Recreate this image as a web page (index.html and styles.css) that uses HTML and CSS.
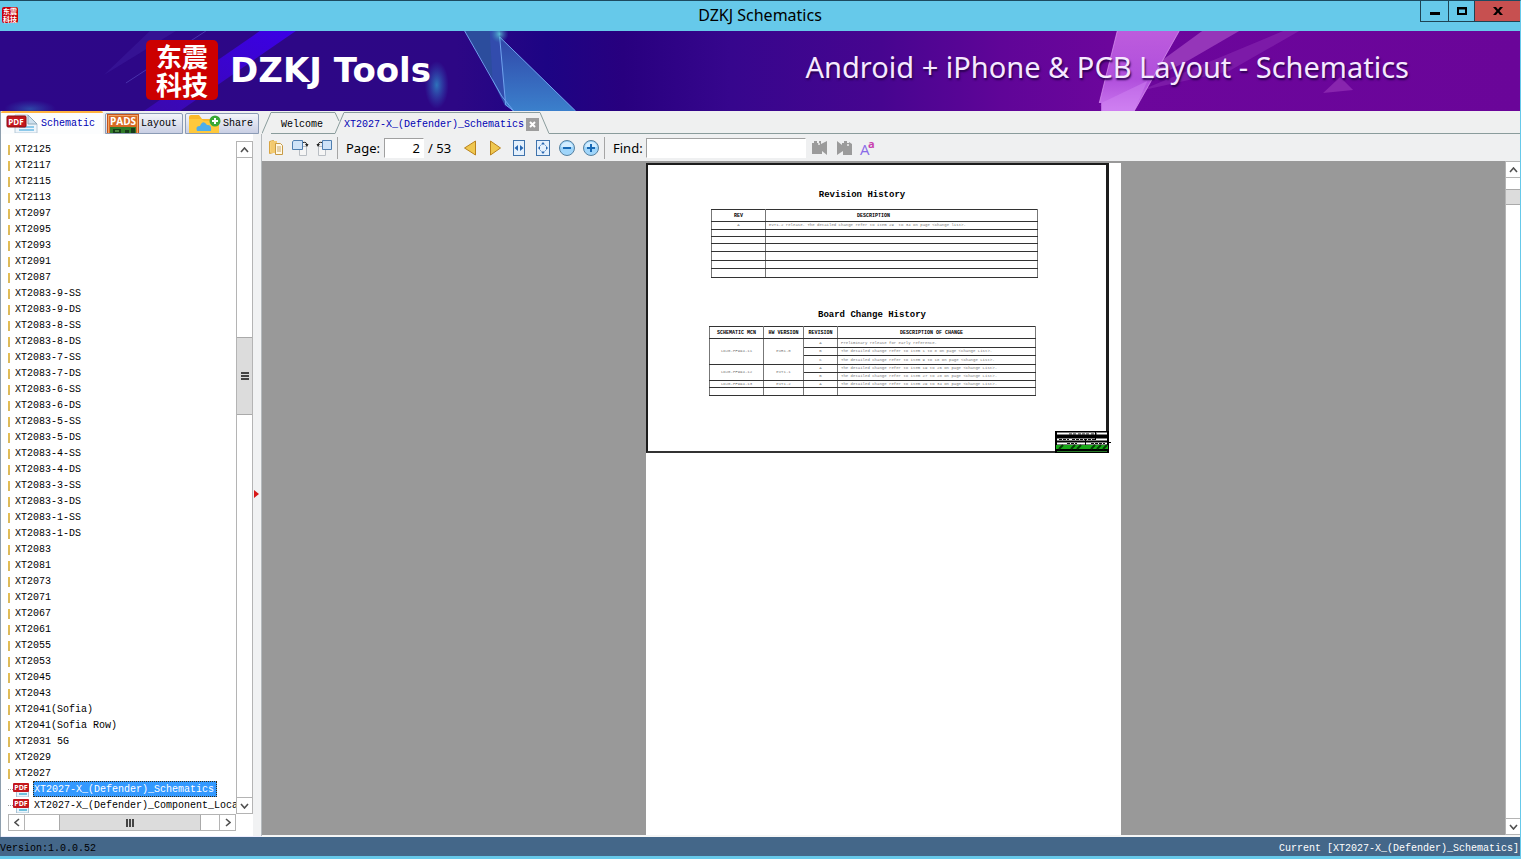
FILE: index.html
```html
<!DOCTYPE html>
<html lang="en">
<head>
<meta charset="utf-8">
<title>DZKJ Schematics</title>
<link rel="stylesheet" href="styles.css">
</head>
<body>
<div class="window">
  <header class="titlebar">
    <span class="app-icon">东震<br>科技</span>
    <h1 class="title">DZKJ Schematics</h1>
    <div class="win-buttons">
      <button class="win-btn" aria-label="Minimize"><svg width="10" height="10"><rect y="6" width="10" height="3"/></svg></button>
      <button class="win-btn win-max" aria-label="Maximize"><svg width="10" height="10"><path d="M0 1h10v8H0zM2 3.500v3.500h6v-3.500z" fill-rule="evenodd"/></svg></button>
      <button class="win-btn win-close" aria-label="Close"><svg width="10" height="10"><path d="M0 1h3l2 2.500L7 1h3L6.500 5 10 9H7L5 6.500 3 9H0l3.500-4z"/></svg></button>
    </div>
  </header>

  <div class="banner">
    <svg class="banner-art" viewBox="0 0 1521 80" preserveAspectRatio="none" aria-hidden="true">
      <defs>
        <linearGradient id="bg"><stop offset="0" stop-color="#2d0788"/><stop offset=".3" stop-color="#2d0785"/><stop offset=".36" stop-color="#1d0484"/><stop offset=".41" stop-color="#28007f"/><stop offset=".48" stop-color="#36068d"/><stop offset=".58" stop-color="#470590"/><stop offset=".66" stop-color="#600598"/><stop offset=".73" stop-color="#6c069c"/><stop offset="1" stop-color="#6a0599"/></linearGradient>
        <linearGradient id="beam" x1="1" y1="0" x2="0" y2="1"><stop offset="0" stop-color="#3b00e6"/><stop offset="1" stop-color="#3a09ae"/></linearGradient>
        <linearGradient id="shard" x1="0" y1="0" x2="0" y2="1"><stop offset="0" stop-color="#3046a8"/><stop offset="1" stop-color="#3b80cc"/></linearGradient>
        <linearGradient id="pink" x1="0" y1="0" x2="0" y2="1"><stop offset="0" stop-color="#bd5cdd"/><stop offset=".6" stop-color="#b04fdc"/><stop offset="1" stop-color="#cb78ef"/></linearGradient>
        <radialGradient id="glow"><stop offset="0" stop-color="#2e7fc0" stop-opacity=".9"/><stop offset="1" stop-color="#2e5fc0" stop-opacity="0"/></radialGradient>
        <radialGradient id="spark"><stop offset="0" stop-color="#6af0e8"/><stop offset="1" stop-color="#3a90c0" stop-opacity="0"/></radialGradient>
      </defs>
      <rect width="1521" height="80" fill="url(#bg)"/>
      <path d="M260 0h36L180 80h-36z" fill="url(#beam)"/>
      <path d="M150 0h26L104 44z" fill="#3d1ea0" opacity=".5"/>
      <path d="M206 0L126 52" stroke="#5545bd" opacity=".7"/>
      <ellipse cx="30" cy="78" rx="26" ry="9" fill="url(#glow)" opacity=".6"/>
      <ellipse cx="437" cy="54" rx="12" ry="24" fill="url(#glow)"/>
      <path d="M465 0h35v60z" fill="#2c4d9d"/>
      <path d="M490 0h10l6 76-13-26z" fill="#324cad"/>
      <path d="M500 6l76 74h-62l-8-6z" fill="url(#shard)"/>
      <path d="M465 0l37 65 12 15M500 6l76 74M500 6l6 68 8 6" fill="none" stroke="#6fa4ef"/>
      <circle cx="500" cy="3" r="9" fill="url(#spark)" opacity=".7"/>
      <path d="M1203 0h37l-50 29-90 46z" fill="#a64bc6" opacity=".7"/>
      <path d="M1284 0h16l-70 40-90 20z" fill="#8a2cb2" opacity=".55"/>
      <path d="M1118 0h62l-45 80h-33v-8h-2z" fill="url(#pink)"/>
      <path d="M1102 72l46-22-13 30h-33z" fill="#d48bf5" opacity=".4"/>
      <path d="M1118 0l-18 72M1180 0l-45 80" stroke="#dd98f2" fill="none" opacity=".7"/>
      <path d="M1324 62l17-16 13 13z" fill="#8825ae"/>
    </svg>
    <div class="brand">
      <span class="logo"><span>东震</span><span>科技</span></span>
      <span class="brand-name">DZKJ Tools</span>
    </div>
    <p class="tagline">Android + iPhone &amp; PCB Layout - Schematics</p>
  </div>

  <main class="main">
    <aside class="sidebar">
      <div class="side-tabs">
        <button class="side-tab side-active">
          <svg width="32" height="19"><path d="M9 1h13l9 9v9H9z" fill="#eef5fb" stroke="#b8cad8"/><path d="M22 1l9 9h-9z" fill="#cfe1ee" stroke="#8fa9ba"/><path d="M13 13h15M13 16h15" stroke="#8cc9ea" stroke-width="2"/><rect x="1" y="2" width="19" height="11" rx="1" fill="#c4161c" stroke="#8c0c10"/><text x="10" y="11" class="pdf-text">PDF</text></svg>
          Schematic</button>
        <button class="side-tab side-layout">
          <svg width="32" height="19"><rect width="32" height="19" fill="#c6541b"/><rect x="1.500" y="1.500" width="29" height="18" fill="#d86a24" stroke="#f0a565"/><text x="16" y="11" class="pads-text">PADS</text><path d="M3 13h26v6H3z" fill="#2e7a28"/><path d="M6 15h8v4H6zM18 16h4v3h-4zM24 14h4v5h-4z" fill="#173c1a"/><path d="M8 17h4" stroke="#7fd063"/></svg>
          Layout</button>
        <button class="side-tab side-share">
          <svg width="32" height="19"><path d="M0 3q0-2 2-2h8l3 4h14q3 0 3 3v11H0z" fill="#fbb829"/><path d="M0 5h12l3 2h15v12H0z" fill="#ffc93c"/><path d="M8 17q-2-5 3-5 3-7 7-1 5-1 4 6z" fill="#4eaeea"/><circle cx="26" cy="7" r="5.500" fill="#39a935"/><path d="M26 4v6M23 7h6" stroke="#fff" stroke-width="2"/></svg>
          Share</button>
      </div>
      <div class="side-body">
        <div class="tree-box">
          <ul class="tree">
            <li><a href="#">XT2125</a></li><li><a href="#">XT2117</a></li><li><a href="#">XT2115</a></li><li><a href="#">XT2113</a></li><li><a href="#">XT2097</a></li><li><a href="#">XT2095</a></li><li><a href="#">XT2093</a></li><li><a href="#">XT2091</a></li><li><a href="#">XT2087</a></li>
            <li><a href="#">XT2083-9-SS</a></li><li><a href="#">XT2083-9-DS</a></li><li><a href="#">XT2083-8-SS</a></li><li><a href="#">XT2083-8-DS</a></li><li><a href="#">XT2083-7-SS</a></li><li><a href="#">XT2083-7-DS</a></li><li><a href="#">XT2083-6-SS</a></li><li><a href="#">XT2083-6-DS</a></li><li><a href="#">XT2083-5-SS</a></li><li><a href="#">XT2083-5-DS</a></li><li><a href="#">XT2083-4-SS</a></li><li><a href="#">XT2083-4-DS</a></li><li><a href="#">XT2083-3-SS</a></li><li><a href="#">XT2083-3-DS</a></li><li><a href="#">XT2083-1-SS</a></li><li><a href="#">XT2083-1-DS</a></li>
            <li><a href="#">XT2083</a></li><li><a href="#">XT2081</a></li><li><a href="#">XT2073</a></li><li><a href="#">XT2071</a></li><li><a href="#">XT2067</a></li><li><a href="#">XT2061</a></li><li><a href="#">XT2055</a></li><li><a href="#">XT2053</a></li><li><a href="#">XT2045</a></li><li><a href="#">XT2043</a></li><li><a href="#">XT2041(Sofia)</a></li><li><a href="#">XT2041(Sofia Row)</a></li><li><a href="#">XT2031 5G</a></li><li><a href="#">XT2029</a></li><li><a href="#">XT2027</a></li>
            <li class="leaf"><svg width="24" height="16"><path d="M0 8.500h5" stroke="#999" stroke-dasharray="1 1"/><path d="M8.500 4v12h12V6" fill="#eaf4fb" stroke="#a9c3d4"/><path d="M11 13h8" stroke="#6fc0dc" stroke-width="2"/><rect x="5" y="2" width="16" height="9" rx="1" fill="#c4161c"/><text x="13" y="9" class="pdf-small">PDF</text></svg><a class="selected" href="#">XT2027-X_(Defender)_Schematics</a></li>
            <li class="leaf"><svg width="24" height="16"><path d="M0 8.500h5" stroke="#999" stroke-dasharray="1 1"/><path d="M8.500 4v12h12V6" fill="#eaf4fb" stroke="#a9c3d4"/><path d="M11 13h8" stroke="#6fc0dc" stroke-width="2"/><rect x="5" y="2" width="16" height="9" rx="1" fill="#c4161c"/><text x="13" y="9" class="pdf-small">PDF</text></svg><a href="#">XT2027-X_(Defender)_Component_Loca</a></li>
          </ul>
          <div class="vscroll">
            <button class="arrow" aria-label="Scroll up"><svg width="9" height="6"><path d="M1 5l3.500-4L8 5"/></svg></button>
            <div class="track track-top"></div>
            <div class="thumb"><svg width="8" height="8"><path d="M0 1h8M0 4h8M0 7h8"/></svg></div>
            <div class="track track-bottom"></div>
            <button class="arrow" aria-label="Scroll down"><svg width="9" height="6"><path d="M1 1l3.500 4L8 1"/></svg></button>
          </div>
          <div class="hscroll">
            <button class="arrow" aria-label="Scroll left"><svg width="6" height="9"><path d="M5 1L1 4.500 5 8"/></svg></button>
            <div class="track track-left"></div>
            <div class="thumb"><svg width="8" height="8"><path d="M1 0v8M4 0v8M7 0v8"/></svg></div>
            <div class="track track-right"></div>
            <button class="arrow" aria-label="Scroll right"><svg width="6" height="9"><path d="M1 1l4 3.500L1 8"/></svg></button>
          </div>
        </div>
        <div class="splitter"><svg width="5" height="8"><path d="M0 0l5 4-5 4z" fill="#d81818"/></svg></div>
      </div>
    </aside>

    <section class="doc">
      <div class="doc-tabs">
        <svg class="slant" width="9" height="22"><path d="M0 21.500L9 .500"/></svg>
        <button class="doc-tab">Welcome</button>
        <svg class="slant" width="9" height="22"><path d="M0 .500L4 9M0 21.500L9 .500"/></svg>
        <div class="doc-tab doc-active"><button class="tab-name">XT2027-X_(Defender)_Schematics</button><button class="tab-close" aria-label="Close tab"><svg width="7" height="7"><path d="M1 1l5 5M6 1L1 6" stroke="#fff" stroke-width="2"/></svg></button></div>
        <svg class="slant" width="9" height="22"><path d="M0 .500L9 21.500"/></svg>
        <div class="tab-rest"></div>
      </div>

      <div class="toolbar">
        <button class="tool" aria-label="Open"><svg width="16" height="16"><path d="M1.500 1.500l4-1v12l-4 1z" fill="#f7d27c" stroke="#d9a441"/><path d="M3 1h6v12H3z" fill="#f3ca70"/><path d="M7.500 3.500h5l2 2v9h-7z" fill="#fff8e6" stroke="#c79a45"/><path d="M9 7h4M9 9h4M9 11h4" stroke="#c9a86a"/></svg></button>
        <button class="tool" aria-label="Rotate right"><svg width="17" height="16"><path d="M7.500 6.500h7v9h-7z" fill="#f5f5f5" stroke="#b9bec4"/><path d="M1.500.500h9v9h-10V2z" fill="#cfe3f8" stroke="#4f7eb0"/><path d="M11 2.500q4-1 4 3" fill="none" stroke="#222"/><path d="M13 4h3.500L15 7z" fill="#222"/></svg></button>
        <button class="tool" aria-label="Rotate left"><svg width="17" height="16"><path d="M2.500 6.500h7v9h-7z" fill="#f5f5f5" stroke="#b9bec4"/><path d="M6.500.500h9v9h-9z" fill="#cfe3f8" stroke="#4f7eb0"/><path d="M6 2.500q-4-1-4 3" fill="none" stroke="#222"/><path d="M.500 4h3.500L2 7z" fill="#222"/></svg></button>
        <span class="sep"></span>
        <label class="page-label" for="page">Page:</label>
        <input class="page-input" id="page" value="2">
        <span class="page-total">/ 53</span>
        <button class="tool" aria-label="Previous page"><svg width="14" height="16"><path d="M11.500 1v14L.500 8z" fill="#efc750" stroke="#b9821c"/></svg></button>
        <button class="tool" aria-label="Next page"><svg width="14" height="16"><path d="M2.500 1v14l10-7z" fill="#efc750" stroke="#b9821c"/></svg></button>
        <button class="tool" aria-label="Fit width"><svg width="16" height="16"><rect x="2.500" y=".500" width="11" height="15" fill="#e4f0fc" stroke="#3f73ac"/><path d="M7 5v6L3.500 8zM9 5v6l3.500-3z" fill="#2867b2"/></svg></button>
        <button class="tool" aria-label="Fit page"><svg width="16" height="16"><rect x="1.500" y=".500" width="13" height="15" fill="#e4f0fc" stroke="#3f73ac"/><path d="M6 4.500L8 2l2 2.500zM6 11.500L8 14l2-2.500zM5 6L3 8l2 2zM11 6l2 2-2 2z" fill="#2867b2"/><path d="M5 5l1 1M11 5l-1 1M5 11l1-1M11 11l-1-1" stroke="#7ba6d5"/></svg></button>
        <button class="tool" aria-label="Zoom out"><svg width="16" height="16"><circle cx="8" cy="8" r="7.500" fill="#9fd5fa" stroke="#56809f"/><path d="M2 7q1-5 6-5t6 5z" fill="#d2edff"/><path d="M4 8h8" stroke="#1769b5" stroke-width="2"/></svg></button>
        <button class="tool" aria-label="Zoom in"><svg width="16" height="16"><circle cx="8" cy="8" r="7.500" fill="#9fd5fa" stroke="#56809f"/><path d="M2 7q1-5 6-5t6 5z" fill="#d2edff"/><path d="M4 8h8M8 4v8" stroke="#1769b5" stroke-width="2"/></svg></button>
        <span class="sep"></span>
        <label class="find-label" for="find">Find:</label>
        <input class="find-input" id="find">
        <button class="tool" aria-label="Find previous"><svg width="16" height="16"><path d="M0 3h2V1h3v2h2V1h2v3l6-3v14l-5-4v3H0z" fill="#9b9b9b"/><circle cx="7" cy="4" r="1" fill="#eee"/></svg></button>
        <button class="tool" aria-label="Find next"><svg width="16" height="16"><path d="M1 1l5 4V3h2V1h3v2h2V2l3 2v11H7v-4l-6 4z" fill="#9b9b9b"/><circle cx="12" cy="5" r="1" fill="#eee"/></svg></button>
        <button class="tool" aria-label="Match case"><svg width="24" height="24"><text x="4" y="19" class="case-big">A</text><text x="12" y="12" class="case-small">a</text></svg></button>
      </div>

      <div class="viewer">
        <div class="canvas">
          <article class="page">
            <div class="sheet">
              <h2 class="sheet-title">Revision History</h2>
              <table class="grid rev-table">
                <colgroup><col class="c-rev"><col></colgroup>
                <tr class="r-head"><th>REV</th><th class="h-desc">DESCRIPTION</th></tr>
                <tr><td>A</td><td class="desc">EVT1.2 release. The detailed change refer to item 29 &nbsp;to 34 on page &lt;Change list&gt;.</td></tr>
                <tr class="r-short"><td></td><td></td></tr>
                <tr class="r-short"><td></td><td></td></tr>
                <tr><td></td><td></td></tr>
                <tr class="r-tall"><td></td><td></td></tr>
                <tr><td></td><td></td></tr>
                <tr class="r-tall"><td></td><td></td></tr>
              </table>
              <h2 class="sheet-title sheet-second">Board Change History</h2>
              <table class="grid board-table">
                <colgroup><col class="c-rev"><col class="c-hw"><col class="c-revision"><col></colgroup>
                <tr class="r-head"><th>SCHEMATIC MCN</th><th>HW VERSION</th><th>REVISION</th><th class="h-change">DESCRIPTION OF CHANGE</th></tr>
                <tr class="r-tall"><td rowspan="3">LD20-PF994-11</td><td rowspan="3">EVR1.0</td><td>A</td><td class="desc">Preliminary release for early reference.</td></tr>
                <tr><td>B</td><td class="desc">The detailed change refer to item 1 to 8 on page &lt;Change List&gt;.</td></tr>
                <tr class="r-tall"><td>C</td><td class="desc">The detailed change refer to item 9 to 18 on page &lt;Change List&gt;.</td></tr>
                <tr><td rowspan="2">LD20-PF994-12</td><td rowspan="2">EVT1.1</td><td>A</td><td class="desc">The detailed change refer to item 19 to 26 on page &lt;Change List&gt;.</td></tr>
                <tr><td>B</td><td class="desc">The detailed change refer to item 27 to 28 on page &lt;Change List&gt;.</td></tr>
                <tr class="r-short"><td>LD20-PF994-13</td><td>EVT1.2</td><td>A</td><td class="desc">The detailed change refer to item 29 to 34 on page &lt;Change List&gt;.</td></tr>
                <tr><td></td><td></td><td></td><td></td></tr>
              </table>
              <svg class="stamp" width="56" height="22" aria-hidden="true"><rect width="54" height="22" fill="#000"/><path d="M2 2.500h50M2 8.500h50M2 12.500h50" stroke="#fff" stroke-width="2"/><path d="M14 3h8M23 3h11M36 3h6M4 8.500h10M17 8.500h24M12 12.500h10M36 12.500h14" stroke="#111" stroke-dasharray="3 1"/><path d="M40.500 0v9M30.500 8v7M52 11.500h4" stroke="#000"/><rect x="1" y="14" width="52" height="4" fill="#18a818"/><path d="M4 18l4-4M16 18l4-4M22 18l4-4M36 18l4-4M42 18l4-4M48 18l4-4" stroke="#053c05" stroke-width="2"/><path d="M2 20.500h50" stroke="#277a27"/></svg>
            </div>
          </article>
        </div>
        <div class="vscroll doc-scroll">
          <button class="arrow" aria-label="Scroll up"><svg width="9" height="6"><path d="M1 5l3.500-4L8 5"/></svg></button>
          <div class="track track-short"></div>
          <div class="thumb"></div>
          <div class="track track-bottom"></div>
          <button class="arrow" aria-label="Scroll down"><svg width="9" height="6"><path d="M1 1l3.500 4L8 1"/></svg></button>
        </div>
      </div>
    </section>
  </main>

  <footer class="status"><span>Version:1.0.0.52</span><span class="current">Current [XT2027-X_(Defender)_Schematics]</span></footer>
</div>
</body>
</html>
```
FILE: styles.css
```css
* { box-sizing: border-box; }
body { margin: 0; overflow: hidden; font: 10px/16px "Liberation Mono", monospace; color: #000; }
button { margin: 0; padding: 0; border: 0; background: none; font: inherit; color: inherit; white-space: nowrap; }
h1, h2, p, ul { margin: 0; padding: 0; }
svg { display: block; flex: none; }

.window { height: 100vh; display: flex; flex-direction: column; background: #eff0f0; border-top: 1px solid #1c4a60; border-right: 1px solid #66c9ea; border-bottom: 3px solid #66c9ea; }

.titlebar { height: 30px; flex: none; display: grid; grid-template-columns: 100px 1fr 100px; background: #66c9ea; }
.app-icon { width: 16px; height: 16px; margin: 6px 2px; border-radius: 2px; background: #c8000a; color: #fff; font: bold 7px/8px "Noto Sans CJK SC", sans-serif; text-align: center; }
.title { font: 16px/29px "Noto Sans", "Open Sans", sans-serif; text-align: center; }
.win-buttons { display: flex; justify-content: flex-end; height: 21px; }
.win-btn { width: 28px; display: flex; align-items: center; justify-content: center; border: solid #1e4353; border-width: 0 0 1px 1px; }
.win-max { width: 26px; }
.win-close { width: 46px; background: #c75050; }

.banner { position: relative; height: 80px; flex: none; display: flex; align-items: center; justify-content: space-between; padding: 0 111px 2px 146px; overflow: hidden; }
.banner-art { position: absolute; inset: 0; width: 100%; height: 100%; }
.brand { position: relative; display: flex; align-items: center; gap: 12px; }
.logo { width: 72px; height: 60px; border-radius: 5px; background: #cc0000; color: #fff; font: bold 26px/28px "Noto Sans CJK SC", sans-serif; display: flex; flex-direction: column; align-items: center; padding-top: 2px; }
.brand-name { color: #fff; font: bold 34px/72px "DejaVu Sans", "Open Sans", sans-serif; white-space: nowrap; }
.tagline { position: relative; color: #f6e9ff; font: 29px/72px "Noto Sans", "Open Sans", sans-serif; text-shadow: 1px 2px 2px #2a0050; white-space: nowrap; padding-bottom: 6px; }

.main { flex: 1; min-height: 0; display: grid; grid-template-columns: 262px 1fr; }

.sidebar { display: flex; flex-direction: column; min-height: 0; border-left: 1px solid #8e9fae; }
.side-tabs { height: 23px; flex: none; display: flex; align-items: flex-end; gap: 2px; }
.side-tab { height: 21px; display: flex; align-items: center; gap: 2px; border: 1px solid #8b9bb5; background: linear-gradient(#f4f5fa, #c9cfe4); border-radius: 2px 2px 0 0; }
.side-layout { padding: 0 5px 0 1px; }
.side-share { padding: 0 5px 0 3px; }
.side-active { height: 23px; padding: 0 8px 0 5px; gap: 3px; border: 0; border-top: 2px solid #ffb23e; background: #fcfdfe; color: #0000b4; }
.pdf-text { font: bold 8px "Open Sans", sans-serif; fill: #fff; text-anchor: middle; }
.pdf-small { font: bold 7px "Open Sans", sans-serif; fill: #fff; text-anchor: middle; }
.pads-text { font: bold 10px "Open Sans", sans-serif; fill: #fff; text-anchor: middle; }

.side-body { flex: 1; min-height: 0; display: grid; grid-template-columns: 1fr 9px; background: #fcfdfe; border-bottom: 1px solid #eef; }
.tree-box { min-height: 0; min-width: 0; display: grid; grid-template-columns: 1fr 17px; grid-template-rows: 1fr 17px; padding: 7px 0 5px 7px; background: #fff; }
.tree { list-style: none; min-width: 0; overflow: hidden; }
.tree li { display: flex; height: 16px; white-space: nowrap; border-left: 2px solid transparent; background: linear-gradient(#e6bf52, #d9b85f) 0 4px / 2px 10px no-repeat; background-origin: border-box; padding-left: 4px; }
.tree .leaf { background: none; padding-left: 0; border-left: 0; gap: 1px; }
.tree a { color: #000; text-decoration: none; padding: 2px 1px 0; line-height: 14px; }
.tree .selected { background: #3399ff; color: #fff; outline: 1px dotted #3a2a10; outline-offset: -1px; padding: 2px 3px 0 1px; }
.vscroll { display: flex; flex-direction: column; border: solid #b4b4b4; border-width: 0 1px; background: #fff; }
.hscroll { display: flex; border: solid #b4b4b4; border-width: 1px 0; background: #fff; }
.arrow { flex: none; width: 100%; height: 17px; display: flex; align-items: center; justify-content: center; border: solid #b4b4b4; border-width: 1px 0; background: #fff; }
.arrow path { fill: none; stroke: #505050; stroke-width: 1.6; }
.hscroll .arrow { width: 17px; height: 15px; border-width: 0 1px; }
.thumb { flex: none; display: flex; align-items: center; justify-content: center; background: #dcdcdc; border: solid #aaa; border-width: 1px 0; height: 78px; }
.thumb path { stroke: #444; stroke-width: 2; }
.hscroll .thumb { width: 142px; height: 15px; border-width: 0 1px; }
.track-top { flex: 180; }
.track-bottom { flex: 384; }
.track-left { flex: 34; }
.track-right { flex: 18; }
.track-short { height: 11px; flex: none; }
.splitter { display: flex; align-items: center; background: #f1f2f3; border-right: 1px solid #b5babd; padding: 18px 0 0 1px; }

.doc { display: flex; flex-direction: column; min-width: 0; min-height: 0; }
.doc-tabs { height: 23px; flex: none; display: flex; padding-top: 1px; }
.slant { fill: none; stroke: #8a9c9c; }
.doc-tab { width: 64px; border: solid #8a9c9c; border-width: 1px 0; text-align: left; padding: 3px 0 0 10px; line-height: 16px; }
.doc-active { width: 196px; display: flex; align-items: center; gap: 2px; border-bottom: 0; padding: 2px 0 0; color: #0000b4; }
.tab-close { width: 13px; height: 13px; display: grid; place-items: center; background: #9d9d9d; }
.tab-rest { flex: 1; border-bottom: 1px solid #8a9c9c; }

.toolbar { height: 27px; flex: none; display: flex; align-items: center; padding: 1px 0 0 2px; background: #eff0f1; font: 13px/20px "Noto Sans", "Open Sans", sans-serif; }
.tool { width: 24px; height: 24px; flex: none; display: grid; place-items: center; }
.sep { width: 1px; height: 22px; margin: 0 8px 0 1px; background: #a5a5a5; }
.page-label { width: 38px; }
.page-input { width: 40px; height: 20px; border: 1px solid #fff; border-top-color: #a0a0a0; border-left-color: #a0a0a0; padding: 0 3px; text-align: right; font: inherit; }
.page-total { width: 35px; padding-left: 4px; white-space: nowrap; }
.find-label { width: 33px; }
.find-input { width: 160px; height: 20px; border: 1px solid #fff; border-top-color: #a0a0a0; border-left-color: #a0a0a0; padding: 0 3px; font: inherit; }
.toolbar .find-input { margin-right: 2px; }
.case-big { font: 15px "Open Sans", sans-serif; fill: #8a6be8; }
.case-small { font: bold 11px "Open Sans", sans-serif; fill: #c93fae; }

.viewer { flex: 1; min-height: 0; display: grid; grid-template-columns: 1fr 15px; border-bottom: 2px solid #f5f6f6; }
.canvas { min-height: 0; overflow: hidden; display: flex; justify-content: center; background: #999; padding-top: 2px; }
.page { width: 475px; background: #fff; }
.doc-scroll { border-right: 0; }
.doc-scroll .thumb { height: 16px; }
.sheet { position: relative; width: 463px; height: 290px; border: 2px solid #1c1c1c; border-right-width: 3px; border-bottom-color: #333; padding: 25px 71px 0 61px; }
.sheet-title { font: bold 9px/10px "Liberation Mono", monospace; text-align: center; padding-right: 20px; }
.sheet-second { margin-top: 32px; padding-right: 0; }
.grid { border-collapse: collapse; table-layout: fixed; width: 327px; margin-top: 6px; font-size: 4px; line-height: 5px; color: #777; border: 1px solid #777; }
.rev-table { margin-top: 9px; margin-left: 2px; }
.grid tr { height: 8px; }
.grid .r-head { height: 12px; }
.grid .r-short { height: 7px; }
.grid .r-tall { height: 9px; }
.grid th, .grid td { padding: 0; border: solid; border-width: 1px; border-color: #333 #777; text-align: center; white-space: nowrap; }
.grid th { font-size: 5px; color: #000; padding-top: 2px; }
.grid .h-desc { padding-right: 56px; }
.grid .h-change { padding-right: 10px; }
.grid .desc { text-align: left; padding-left: 3px; }
.c-rev { width: 54px; }
.c-hw { width: 40px; }
.c-revision { width: 34px; }
.stamp { position: absolute; right: -5px; bottom: -2px; }

.status { height: 19px; flex: none; display: flex; justify-content: space-between; background: #446789; line-height: 24px; overflow: hidden; }
.current { color: #fff; padding-right: 1px; }
```
